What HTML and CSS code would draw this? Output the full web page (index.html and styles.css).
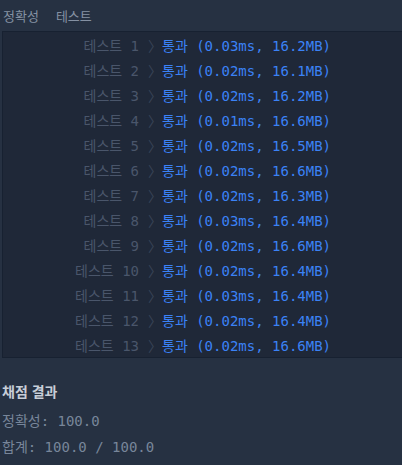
FILE: index.html
```html
<!DOCTYPE html>
<html lang="ko">
<head>
    <meta charset="UTF-8">
    <meta name="viewport" content="width=device-width, initial-scale=1.0">
    <title>채점 결과</title>
    <link rel="stylesheet" href="styles.css">
</head>
<body>
    <div class="tabs">
        <span class="tab">정확성</span>
        <span class="tab">테스트</span>
    </div>
    <table class="result-table">
        <tbody>
            <tr><td class="td-label">테스트 1<span class="arrow">〉</span></td><td class="result passed">통과 (0.03ms, 16.2MB)</td></tr>
            <tr><td class="td-label">테스트 2<span class="arrow">〉</span></td><td class="result passed">통과 (0.02ms, 16.1MB)</td></tr>
            <tr><td class="td-label">테스트 3<span class="arrow">〉</span></td><td class="result passed">통과 (0.02ms, 16.2MB)</td></tr>
            <tr><td class="td-label">테스트 4<span class="arrow">〉</span></td><td class="result passed">통과 (0.01ms, 16.6MB)</td></tr>
            <tr><td class="td-label">테스트 5<span class="arrow">〉</span></td><td class="result passed">통과 (0.02ms, 16.5MB)</td></tr>
            <tr><td class="td-label">테스트 6<span class="arrow">〉</span></td><td class="result passed">통과 (0.02ms, 16.6MB)</td></tr>
            <tr><td class="td-label">테스트 7<span class="arrow">〉</span></td><td class="result passed">통과 (0.02ms, 16.3MB)</td></tr>
            <tr><td class="td-label">테스트 8<span class="arrow">〉</span></td><td class="result passed">통과 (0.03ms, 16.4MB)</td></tr>
            <tr><td class="td-label">테스트 9<span class="arrow">〉</span></td><td class="result passed">통과 (0.02ms, 16.6MB)</td></tr>
            <tr><td class="td-label">테스트 10<span class="arrow">〉</span></td><td class="result passed">통과 (0.02ms, 16.4MB)</td></tr>
            <tr><td class="td-label">테스트 11<span class="arrow">〉</span></td><td class="result passed">통과 (0.03ms, 16.4MB)</td></tr>
            <tr><td class="td-label">테스트 12<span class="arrow">〉</span></td><td class="result passed">통과 (0.02ms, 16.4MB)</td></tr>
            <tr><td class="td-label">테스트 13<span class="arrow">〉</span></td><td class="result passed">통과 (0.02ms, 16.6MB)</td></tr>
        </tbody>
    </table>
    <div class="summary">
        <h4>채점 결과</h4>
        <p>정확성: 100.0</p>
        <p>합계: 100.0 / 100.0</p>
    </div>
</body>
</html>
```

FILE: styles.css
```css
body {
    margin: 0;
    padding: 0 0 0 2px;
    background-color: #263142;
    color: #78869a;
    font-family: "DejaVu Sans Mono", "Noto Sans CJK KR", monospace;
    font-size: 14px;
}
.tabs {
    height: 31px;
    display: flex;
    align-items: center;
    gap: 17px;
    padding-left: 1px;
    font-family: "Noto Sans CJK KR", sans-serif;
    font-size: 13px;
    color: #8591a3;
}
.result-table {
    width: 100%;
    border-collapse: collapse;
    background-color: #1f2838;
    border-top: 1px solid #172131;
    border-left: 1px solid #172131;
    border-bottom: 1px solid #172131;
}
.result-table td {
    height: 25px;
    padding: 0;
    white-space: nowrap;
}
.td-label {
    width: 153px;
    text-align: right;
    color: #4a566b;
}
.arrow {
    margin-left: 9px;
    letter-spacing: -6px;
    color: #394457;
    font-family: "Noto Sans CJK KR", sans-serif;
    font-size: 14px;
}
.result {
    padding-left: 6px !important;
}
.passed {
    color: #3b82f6;
}
.summary {
    padding-top: 23px;
}
.summary h4 {
    margin: 0 0 11px;
    font-family: "Noto Sans CJK KR", sans-serif;
    font-size: 14px;
    color: #c7ced8;
}
.summary p {
    margin: 0 0 7px;
    font-size: 14px;
    line-height: 19px;
    color: #78869a;
}
```
